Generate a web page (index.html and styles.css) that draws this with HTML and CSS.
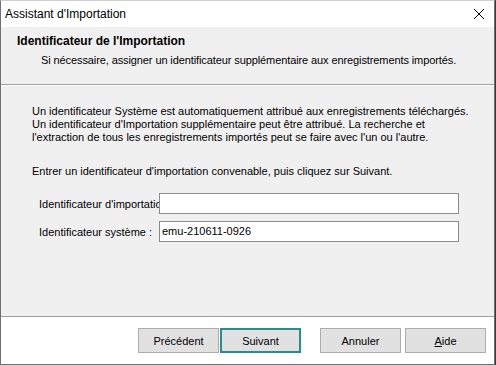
FILE: index.html
```html
<!DOCTYPE html>
<html lang="fr">

<head>
    <meta charset="UTF-8">
    <title>Assistant d'Importation</title>
    <link rel="stylesheet" href="styles.css">
</head>

<body>

    <div class="window">
        <div class="title-bar">
            <span class="title">Assistant d'Importation</span>
            <svg class="close" width="12" height="12" viewBox="0 0 12 12">
                <path d="M1 1 L11 11 M11 1 L1 11" stroke="#000" stroke-width="1" fill="none" />
            </svg>
        </div>

        <div class="header">
            <div class="header-title">Identificateur de l'Importation</div>
            <div class="header-sub">Si nécessaire, assigner un identificateur supplémentaire aux enregistrements importés.</div>
        </div>

        <div class="content">
            <p class="intro">
                Un identificateur Système est automatiquement attribué aux enregistrements téléchargés.<br>
                Un identificateur d'Importation supplémentaire peut être attribué. La recherche et<br>
                l'extraction de tous les enregistrements importés peut se faire avec l'un ou l'autre.
            </p>
            <p class="prompt">Entrer un identificateur d'importation convenable, puis cliquez sur Suivant.</p>

            <div class="field">
                <label class="field-label">Identificateur d'importation :</label>
                <div class="field-input"></div>
            </div>
            <div class="field">
                <label class="field-label">Identificateur système :</label>
                <div class="field-input">emu-210611-0926</div>
            </div>
        </div>

        <div class="footer">
            <button class="btn">Précédent</button>
            <button class="btn btn-default">Suivant</button>
            <button class="btn btn-cancel">Annuler</button>
            <button class="btn"><u>A</u>ide</button>
        </div>
    </div>

</body>

</html>
```

FILE: styles.css
```css
body {
    margin: 0;
    background-color: #3a3a3a;
    font-family: "Liberation Sans", Arial, sans-serif;
    font-size: 11px;
    color: #000000;
}

.window {
    width: 493px;
    height: 363px;
    display: flex;
    flex-direction: column;
    background-color: #f0f0f0;
    border: 1px solid #707070;
    border-top-color: #cfcfcf;
}

/* Title bar */
.title-bar {
    height: 26px;
    display: flex;
    align-items: center;
    justify-content: space-between;
    padding: 0 9px 0 4px;
    background-color: #ffffff;
}

.title {
    font-size: 12px;
}

.close {
    display: block;
}

/* Wizard header */
.header {
    height: 58px;
    box-sizing: border-box;
    padding: 6px 0 0 16px;
    border-bottom: 1px solid #a0a0a0;
}

.header-title {
    font-size: 12px;
    font-weight: bold;
    line-height: 16px;
}

.header-sub {
    margin-top: 3px;
    padding-left: 24px;
    line-height: 16px;
    letter-spacing: -0.1px;
}

/* Main content */
.content {
    flex: 1;
    padding: 19px 0 0 31px;
    border-top: 1px solid #ffffff;
    border-bottom: 1px solid #a0a0a0;
}

.intro,
.prompt {
    margin: 0;
    line-height: 13px;
}

.prompt {
    margin-top: 21px;
    margin-bottom: 15px;
}

.field {
    display: flex;
    align-items: center;
    margin-bottom: 7px;
    padding-left: 7px;
}

.field-label {
    width: 120px;
    white-space: nowrap;
    overflow: hidden;
}

.field-input {
    width: 296px;
    height: 19px;
    line-height: 19px;
    padding-left: 2px;
    background-color: #ffffff;
    border: 1px solid #8c8c8c;
}

/* Buttons */
.footer {
    height: 47px;
    box-sizing: border-box;
    display: flex;
    align-items: flex-start;
    justify-content: flex-end;
    padding: 11px 8px 0 0;
    background-color: #ffffff;
}

.btn {
    width: 81px;
    height: 25px;
    margin-left: 4px;
    padding: 0;
    font-family: inherit;
    font-size: 11px;
    color: #000000;
    background-color: #e1e1e1;
    border: 1px solid #adadad;
}

.btn-default {
    margin-left: 1px;
    border: 2px solid #2a8c8c;
}

.btn-cancel {
    margin-left: 19px;
}

.btn u {
    text-decoration: underline;
}
```
